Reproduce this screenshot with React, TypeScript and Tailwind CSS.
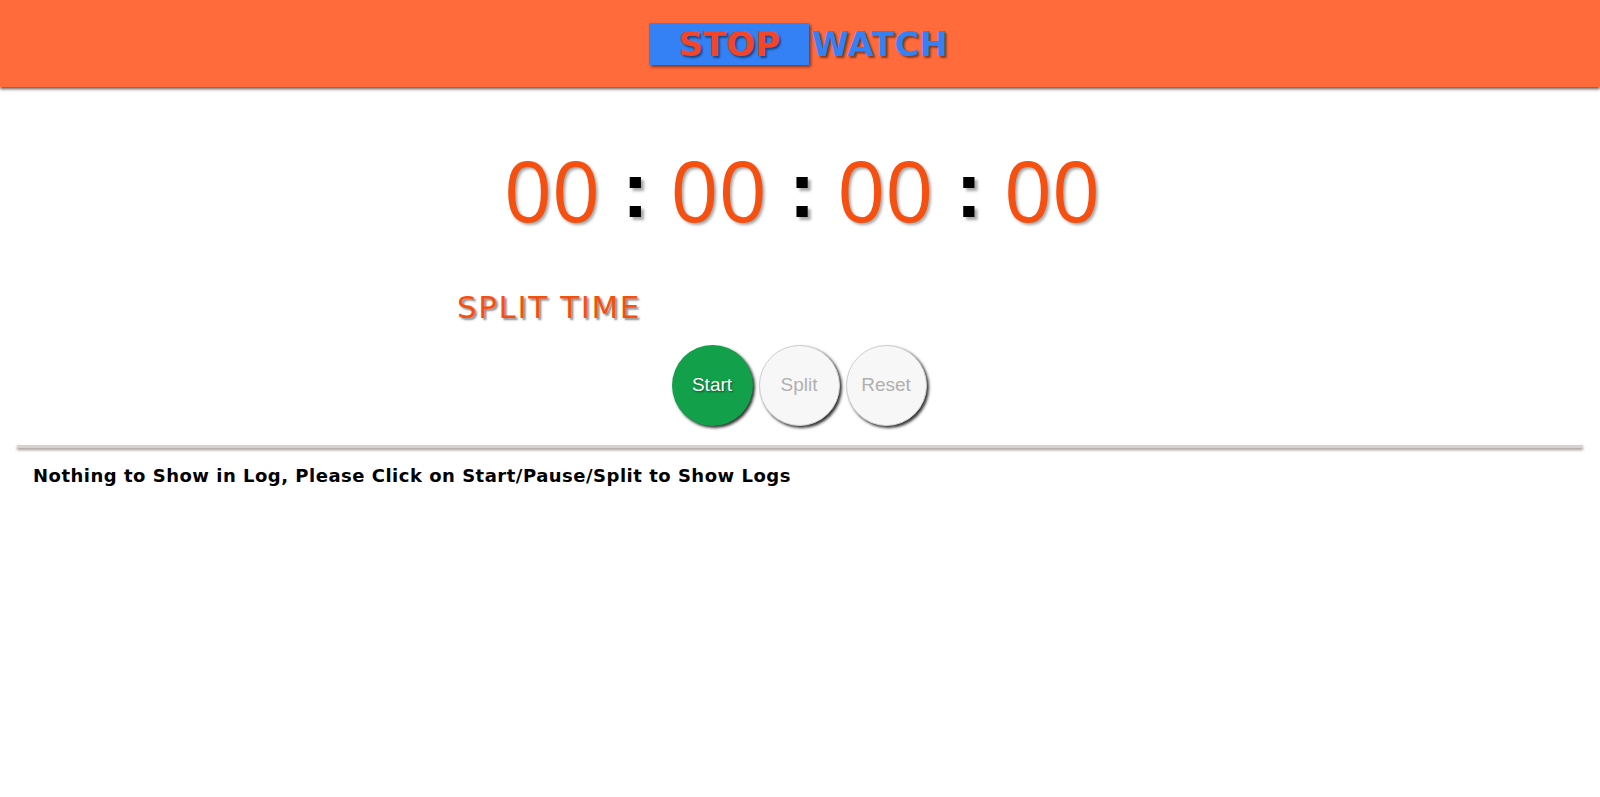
import React from "react";

export default function App() {
  const digit = "text-[#f5500f] [text-shadow:2px_2px_3px_rgba(0,0,0,0.35)]";
  const colon = "text-black font-bold font-['Liberation_Sans',sans-serif] text-[80px] mx-[22px] [text-shadow:3px_3px_3px_rgba(0,0,0,0.35)]";
  return (
    <div className="min-h-[797px] bg-white font-['DejaVu_Sans',sans-serif]">
      <header className="h-[87px] bg-[#ff6b3a] flex items-start justify-center pt-[23px] pr-[3px] shadow-[0_2px_3px_rgba(60,40,30,0.8)]">
        <div className="flex items-start">
          <div className="w-[160px] h-[42px] bg-[#3381f5] shadow-[2px_2px_3px_rgba(0,0,0,0.5)] flex items-center justify-center">
            <span className="text-[34px] font-bold leading-none text-[#f2452a] [text-shadow:2px_2px_2px_rgba(0,0,0,0.45)]">STOP</span>
          </div>
          <span className="ml-[2px] h-[42px] flex items-center text-[34px] font-bold leading-none text-[#3381f5] [text-shadow:2px_2px_2px_rgba(0,0,0,0.45)]">WATCH</span>
        </div>
      </header>

      <div className="flex justify-center mt-[58px] h-[90px] items-center font-['Open_Sans',sans-serif] text-[84px] leading-none pl-[4px]">
        <span className={digit}>00</span>
        <span className={colon}>:</span>
        <span className={digit}>00</span>
        <span className={colon}>:</span>
        <span className={digit}>00</span>
        <span className={colon}>:</span>
        <span className={digit}>00</span>
      </div>

      <div className="mt-[52px] pl-[457px] h-[40px] flex items-center">
        <span className="text-[31px] tracking-[1.6px] text-[#f5500f] [text-shadow:2px_2px_2px_rgba(0,0,0,0.45)] leading-none">SPLIT TIME</span>
      </div>

      <div className="flex justify-center gap-[6px] mt-[18px] pr-[2px] font-['Liberation_Sans',sans-serif]">
        <button className="w-[81px] h-[81px] rounded-full bg-[#12a04a] text-white text-[19px] shadow-[2px_2px_3px_rgba(0,0,0,0.8)] [text-shadow:1px_1px_2px_rgba(0,0,0,0.5)]">Start</button>
        <button className="w-[81px] h-[81px] rounded-full bg-[#f7f7f7] border border-[#d0d0d0] text-[#b0b0b0] text-[19px] shadow-[2px_2px_3px_rgba(0,0,0,0.8)]">Split</button>
        <button className="w-[81px] h-[81px] rounded-full bg-[#f7f7f7] border border-[#d0d0d0] text-[#b0b0b0] text-[19px] shadow-[2px_2px_3px_rgba(0,0,0,0.8)]">Reset</button>
      </div>

      <div className="mx-[17px] mt-[19px] h-[3px] bg-[#d6d2d0] shadow-[0_2px_3px_rgba(120,100,90,0.7)]" />

      <div className="px-[33px] pt-[19px] text-[18px] tracking-[0.5px] font-bold text-black leading-none">
        Nothing to Show in Log, Please Click on Start/Pause/Split to Show Logs
      </div>
    </div>
  );
}
